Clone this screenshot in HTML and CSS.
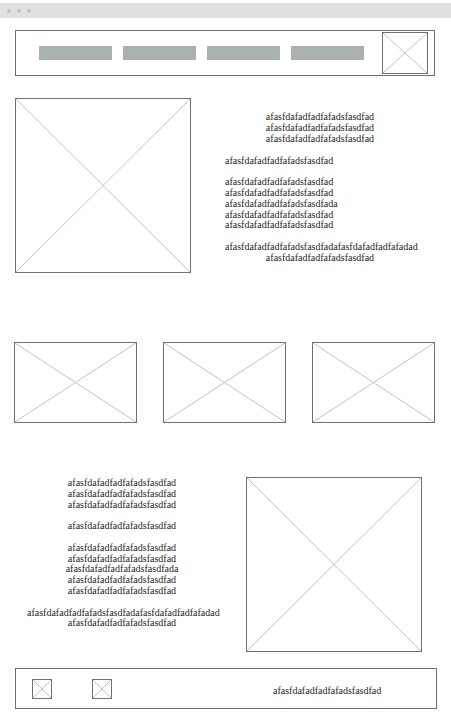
FILE: index.html
```html
<!DOCTYPE html>
<html lang="en">
<head>
    <meta charset="UTF-8">
    <meta name="viewport" content="width=device-width, initial-scale=1.0">
    <title>Wireframe</title>
    <link rel="stylesheet" href="styles.css">
</head>

<body>
    <div class="chrome">
        <span class="dot"></span>
        <span class="dot"></span>
        <span class="dot"></span>
    </div>

    <header class="header">
        <nav class="nav">
            <span class="nav-item"></span>
            <span class="nav-item"></span>
            <span class="nav-item"></span>
            <span class="nav-item"></span>
        </nav>
        <div class="ph ph--logo">
            <svg viewBox="0 0 100 100" preserveAspectRatio="none"><line x1="0" y1="0" x2="100" y2="100"/><line x1="100" y1="0" x2="0" y2="100"/></svg>
        </div>
    </header>

    <section class="feature">
        <div class="ph ph--square">
            <svg viewBox="0 0 100 100" preserveAspectRatio="none"><line x1="0" y1="0" x2="100" y2="100"/><line x1="100" y1="0" x2="0" y2="100"/></svg>
        </div>
        <div class="copy copy--right">
            <p class="center">afasfdafadfadfafadsfasdfad<br>afasfdafadfadfafadsfasdfad<br>afasfdafadfadfafadsfasdfad</p>
            <p>afasfdafadfadfafadsfasdfad</p>
            <p>afasfdafadfadfafadsfasdfad<br>afasfdafadfadfafadsfasdfad<br>afasfdafadfadfafadsfasdfada<br>afasfdafadfadfafadsfasdfad<br>afasfdafadfadfafadsfasdfad</p>
            <p class="center">afasfdafadfadfafadsfasdfadafasfdafadfadfafadad<br>afasfdafadfadfafadsfasdfad</p>
        </div>
    </section>

    <section class="cards">
        <div class="ph ph--card">
            <svg viewBox="0 0 100 100" preserveAspectRatio="none"><line x1="0" y1="0" x2="100" y2="100"/><line x1="100" y1="0" x2="0" y2="100"/></svg>
        </div>
        <div class="ph ph--card">
            <svg viewBox="0 0 100 100" preserveAspectRatio="none"><line x1="0" y1="0" x2="100" y2="100"/><line x1="100" y1="0" x2="0" y2="100"/></svg>
        </div>
        <div class="ph ph--card">
            <svg viewBox="0 0 100 100" preserveAspectRatio="none"><line x1="0" y1="0" x2="100" y2="100"/><line x1="100" y1="0" x2="0" y2="100"/></svg>
        </div>
    </section>

    <section class="feature feature--flip">
        <div class="copy copy--left">
            <p>afasfdafadfadfafadsfasdfad<br>afasfdafadfadfafadsfasdfad<br>afasfdafadfadfafadsfasdfad</p>
            <p>afasfdafadfadfafadsfasdfad</p>
            <p>afasfdafadfadfafadsfasdfad<br>afasfdafadfadfafadsfasdfad<br>afasfdafadfadfafadsfasdfada<br>afasfdafadfadfafadsfasdfad<br>afasfdafadfadfafadsfasdfad</p>
            <p>afasfdafadfadfafadsfasdfadafasfdafadfadfafadad<br>afasfdafadfadfafadsfasdfad</p>
        </div>
        <div class="ph ph--square">
            <svg viewBox="0 0 100 100" preserveAspectRatio="none"><line x1="0" y1="0" x2="100" y2="100"/><line x1="100" y1="0" x2="0" y2="100"/></svg>
        </div>
    </section>

    <footer class="footer">
        <div class="ph ph--icon">
            <svg viewBox="0 0 100 100" preserveAspectRatio="none"><line x1="0" y1="0" x2="100" y2="100"/><line x1="100" y1="0" x2="0" y2="100"/></svg>
        </div>
        <div class="ph ph--icon">
            <svg viewBox="0 0 100 100" preserveAspectRatio="none"><line x1="0" y1="0" x2="100" y2="100"/><line x1="100" y1="0" x2="0" y2="100"/></svg>
        </div>
        <span class="footer-text">afasfdafadfadfafadsfasdfad</span>
    </footer>
</body>
</html>
```

FILE: styles.css
```css
body {
    margin: 0;
    background-color: #fff;
    font-family: "Liberation Serif", "Times New Roman", serif;
    font-size: 10px;
    line-height: 10.8px;
    color: #1e1e1e;
}
.chrome {
    display: flex;
    align-items: center;
    gap: 6px;
    height: 15px;
    margin-top: 3px;
    padding-left: 7px;
    background-color: #e0e0e0;
}
.dot {
    width: 4px;
    height: 4px;
    border-radius: 50%;
    background-color: #c4c4c4;
}
/* placeholder box with a cross */
.ph {
    box-sizing: border-box;
    border: 1px solid #707070;
    flex-shrink: 0;
}
.ph svg {
    display: block;
    width: 100%;
    height: 100%;
}
.ph line {
    stroke: #c2c2c2;
    stroke-width: 1;
    vector-effect: non-scaling-stroke;
}
.header {
    display: flex;
    align-items: center;
    box-sizing: border-box;
    width: 420px;
    height: 46px;
    margin: 12px 0 0 15px;
    padding: 0 6px 0 23px;
    border: 1px solid #707070;
}
.nav {
    display: flex;
    gap: 11px;
    flex: 1;
}
.nav-item {
    width: 73px;
    height: 14px;
    background-color: #a9b1af;
}
.ph--logo {
    width: 46px;
    height: 42px;
}
.feature {
    display: flex;
    align-items: center;
    margin-top: 22px;
    padding-left: 15px;
}
.ph--square {
    width: 176px;
    height: 175px;
}
.copy p {
    margin: 0 0 10.8px;
    white-space: nowrap;
}
.copy p:last-child {
    margin-bottom: 0;
}
.copy--right {
    width: 190px;
    margin-left: 34px;
    padding-top: 5px;
}
.center {
    text-align: center;
}
.cards {
    display: flex;
    gap: 26px;
    margin-top: 69px;
    padding-left: 14px;
}
.ph--card {
    width: 123px;
    height: 81px;
}
.feature--flip {
    align-items: flex-start;
    margin-top: 54px;
    padding-left: 27px;
}
.copy--left {
    width: 190px;
    margin-right: 29px;
    padding-top: 1px;
    text-align: center;
}
.footer {
    display: flex;
    align-items: center;
    box-sizing: border-box;
    width: 422px;
    height: 41px;
    margin: 16px 0 0 15px;
    padding-left: 16px;
    border: 1px solid #707070;
}
.ph--icon {
    width: 20px;
    height: 20px;
    margin-right: 40px;
}
.footer .ph--icon:last-of-type {
    margin-right: 0;
}
.footer-text {
    margin-left: 161px;
    padding-top: 5px;
}
```
